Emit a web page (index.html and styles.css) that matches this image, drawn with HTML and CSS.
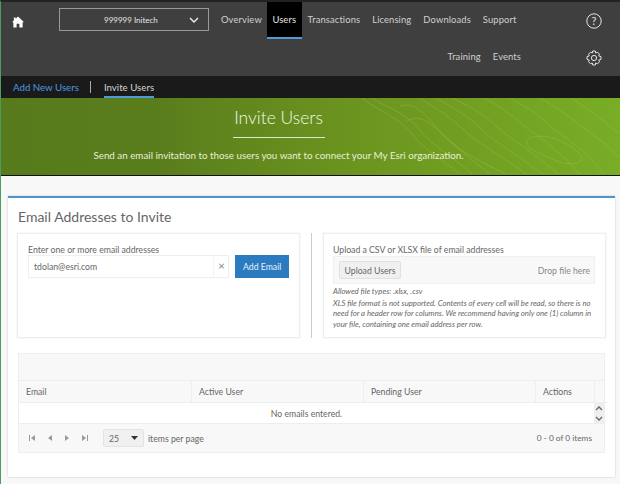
FILE: index.html
```html
<!DOCTYPE html>
<html lang="en">
<head>
    <meta charset="UTF-8">
    <title>Invite Users</title>
    <link rel="stylesheet" href="styles.css">
</head>
<body>
    <header class="topnav">
        <a class="home">
            <svg width="12" height="12" viewBox="0 0 13 13"><path d="M6.500 .5 12.800 6.500 11.500 7V12.500H8V8.500H5V12.500H1.500V7L.2 6.500 2 4.800V1.500H4V2.900Z" fill="#fff"/></svg>
        </a>
        <div class="org">
            <span>999999 Initech</span>
            <svg width="10" height="6" viewBox="0 0 10 6"><path d="M1 1 5 5 9 1" fill="none" stroke="#eee" stroke-width="1.400"/></svg>
        </div>
        <div class="links">
            <div class="row">
                <a>Overview</a>
                <a class="active">Users</a>
                <a>Transactions</a>
                <a>Licensing</a>
                <a>Downloads</a>
                <a>Support</a>
            </div>
            <div class="row second">
                <a>Training</a>
                <a>Events</a>
            </div>
        </div>
        <div class="tools">
            <svg width="16" height="16" viewBox="0 0 16 16"><circle cx="8" cy="8" r="7.200" fill="none" stroke="#e6e6e6"/><text x="8" y="11.700" text-anchor="middle" class="help">?</text></svg>
            <svg width="16" height="16" viewBox="0 0 16 16"><path d="M6.700 1H9.300L9.700 3 11.500 2.200 13.500 4.200 12.700 5.900 15 6.600V9.400L12.700 10.100 13.500 11.800 11.500 13.800 9.700 13 9.300 15H6.700L6.300 13 4.500 13.800 2.500 11.800 3.300 10.100 1 9.400V6.600L3.300 5.900 2.500 4.200 4.500 2.200 6.300 3Z" fill="none" stroke="#e6e6e6"/><circle cx="8" cy="8" r="2.600" fill="none" stroke="#e6e6e6"/></svg>
        </div>
    </header>

    <nav class="subnav">
        <a class="add">Add New Users</a>
        <i class="sep"></i>
        <a class="current">Invite Users</a>
    </nav>

    <section class="banner">
        <svg class="contours" width="260" height="76" viewBox="0 0 260 76" fill="none" stroke="#b5d56a" stroke-opacity=".4" stroke-width=".6">
            <path d="M2 0C20 14 40 20 52 36S80 60 100 76"/>
            <path d="M12 0C28 10 48 16 60 32S90 56 112 76"/>
            <path d="M40 8C52 4 62 12 72 24S96 50 130 76"/>
            <path d="M46 24C60 14 72 26 84 38S112 60 146 76"/>
            <path d="M60 0C78 12 92 20 104 32S132 52 166 76"/>
            <path d="M76 0C94 10 108 18 120 30S148 50 182 76"/>
            <path d="M92 0C110 8 124 16 136 28S164 46 198 76"/>
            <path d="M124 0C140 8 150 16 162 26S190 44 220 76"/>
            <path d="M150 0C164 8 176 14 188 26S216 42 244 76"/>
            <path d="M180 0C194 8 204 14 216 24S240 40 260 60"/>
            <path d="M210 0C222 6 232 14 242 22S254 32 260 36"/>
            <path d="M170 40C186 34 206 44 218 54S212 70 194 62 160 48 170 40Z"/>
        </svg>
        <h1>Invite Users</h1>
        <hr>
        <p>Send an email invitation to those users you want to connect your My Esri organization.</p>
    </section>

    <main class="content">
        <div class="card">
            <h2>Email Addresses to Invite</h2>
            <div class="panels">
                <div class="panel">
                    <label>Enter one or more email addresses</label>
                    <div class="entry">
                        <div class="field">
                            <span>tdolan@esri.com</span>
                            <b>&times;</b>
                        </div>
                        <button class="primary">Add Email</button>
                    </div>
                </div>
                <i class="divider"></i>
                <div class="panel upload">
                    <label>Upload a CSV or XLSX file of email addresses</label>
                    <div class="dropzone">
                        <button>Upload Users</button>
                        <span>Drop file here</span>
                    </div>
                    <p class="types">Allowed file types: .xlsx, .csv</p>
                    <p class="note">XLS file format is not supported. Contents of every cell will be read, so there is no need for a header row for columns. We recommend having only one (1) column in your file, containing one email address per row.</p>
                </div>
            </div>

            <div class="grid">
                <div class="toolbar"></div>
                <div class="cols">
                    <div>Email</div>
                    <div>Active User</div>
                    <div>Pending User</div>
                    <div>Actions</div>
                    <div></div>
                </div>
                <div class="body">
                    <div class="empty">No emails entered.</div>
                    <div class="scroll">
                        <svg width="8" height="5" viewBox="0 0 8 5"><path d="M1 4 4 1 7 4" fill="none" stroke="#666" stroke-width="1.300"/></svg>
                        <svg width="8" height="5" viewBox="0 0 8 5"><path d="M1 1 4 4 7 1" fill="none" stroke="#666" stroke-width="1.300"/></svg>
                    </div>
                </div>
                <div class="pager">
                    <div class="arrows">
                        <svg width="6" height="6" viewBox="0 0 6 6"><path d="M0 0H1V6H0ZM6 0V6L2 3Z"/></svg>
                        <svg width="4" height="6" viewBox="0 0 4 6"><path d="M4 0V6L0 3Z"/></svg>
                        <svg width="4" height="6" viewBox="0 0 4 6"><path d="M0 0V6L4 3Z"/></svg>
                        <svg width="6" height="6" viewBox="0 0 6 6"><path d="M0 0V6L4 3ZM5 0H6V6H5Z"/></svg>
                    </div>
                    <div class="size">
                        <span>25</span>
                        <svg width="7" height="4" viewBox="0 0 7 4"><path d="M0 0H7L3.500 4Z" fill="#333"/></svg>
                    </div>
                    <span class="per">items per page</span>
                    <span class="count">0 - 0 of 0 items</span>
                </div>
            </div>
        </div>
    </main>
</body>
</html>
```

FILE: styles.css
```css
* {
    box-sizing: border-box;
}

body {
    margin: 0;
    height: 484px;
    overflow: hidden;
    font-family: Lato, "Open Sans", sans-serif;
    font-size: 8.700px;
    color: #666;
    background-color: #f8f8f8;
    border-left: 1px solid #4f9a63;
    border-top: 2px solid #222;
}

/* top bar */
.topnav {
    display: flex;
    height: 74px;
    background-color: #3f3f3f;
    color: #d0d0d0;
}

.home {
    width: 58px;
    padding: 14px 0 0 11px;
}

.home svg {
    display: block;
}

.org {
    display: flex;
    align-items: center;
    width: 150px;
    height: 23px;
    margin-top: 6px;
    padding: 0 9px 0 44px;
    justify-content: space-between;
    border: 1px solid #999;
    color: #e4e4e4;
    font-size: 8px;
}

.links {
    flex: 1;
    padding-left: 6px;
}

.row {
    display: flex;
    height: 37px;
    font-size: 9.400px;
    letter-spacing: .12px;
}

.row a {
    padding: 12px 6px 0;
}

.row a.active {
    margin-left: -1px;
    padding: 12px 5.500px 0;
    background-color: #000;
    border-bottom: 2px solid #4f9ad8;
    color: #e6e6e6;
}

.row.second {
    justify-content: flex-end;
    height: 35px;
    padding-right: 33px;
}

.row.second a {
    padding-top: 12px;
}

.tools {
    display: flex;
    flex-direction: column;
    gap: 21px;
    width: 60px;
    padding: 11px 0 0 26px;
}

.help {
    font-size: 11px;
    fill: #e6e6e6;
    font-family: Lato, sans-serif;
}

/* sub nav */
.subnav {
    display: flex;
    align-items: center;
    height: 22px;
    padding-left: 12px;
    background-color: #1a1a1a;
    font-size: 9.700px;
}

.add {
    color: #4a9ae0;
}

.sep {
    width: 1px;
    height: 12px;
    margin: 0 13px 0 11px;
    background-color: #aaa;
}

.current {
    align-self: flex-end;
    height: 20px;
    padding-top: 3px;
    color: #d4d4d4;
    border-bottom: 2px solid #4f9ad8;
}

/* banner */
.banner {
    position: relative;
    height: 78px;
    padding: 1px 64px 0 0;
    text-align: center;
    color: #e8efd8;
    background: linear-gradient(90deg, #577a1c 0%, #5a7d1c 25%, #6b931f 55%, #79ad26 100%);
    border-bottom: 1px solid #111;
    overflow: hidden;
}

.contours {
    position: absolute;
    top: 0;
    right: 0;
}

.banner h1 {
    position: relative;
    margin: 8px 0 0;
    font-size: 17.500px;
    font-weight: 300;
    color: #f4f7ea;
    line-height: 22px;
}

.banner hr {
    position: relative;
    width: 92px;
    margin: 8px auto 0;
    border: 0;
    border-top: 1px solid #dfe8c8;
}

.banner p {
    position: relative;
    margin: 11px 0 0;
    font-size: 9.800px;
}

/* content */
.content {
    padding: 20px 5px 0 7px;
}

.card {
    height: 281px;
    padding: 10px 9px 0;
    background-color: #fff;
    border-top: 2px solid #4f94cf;
    box-shadow: 0 0 2px rgba(0, 0, 0, .2);
}

.card h2 {
    margin: 0 0 0 1px;
    font-size: 14px;
    font-weight: 400;
    line-height: 17px;
    color: #666;
}

.panels {
    display: flex;
    gap: 11px;
    margin-top: 8px;
}

.panel {
    flex: none;
    width: 283px;
    height: 105px;
    padding: 10px;
    border: 1px solid #eee;
    box-shadow: 0 0 2px rgba(0, 0, 0, .08);
}

.panel.upload {
    padding-left: 9px;
}

.panel label {
    display: block;
    line-height: 11px;
}

.divider {
    width: 1px;
    background-color: #ccc;
}

.entry {
    display: flex;
    gap: 6px;
    height: 23px;
}

.field {
    display: flex;
    justify-content: space-between;
    align-items: stretch;
    width: 203px;
    padding-left: 5px;
    border: 1px solid #eee;
}

.field span {
    align-self: center;
}

.field b {
    width: 15px;
    border-left: 1px solid #f4f4f4;
    font-weight: 400;
    font-size: 12px;
    line-height: 20px;
    text-align: center;
    color: #888;
}

.primary {
    width: 54px;
    border: 0;
    color: #e8f1f8;
    background-color: #2b7bc0;
    font: 8.700px Lato, sans-serif;
}

.dropzone {
    display: flex;
    justify-content: space-between;
    align-items: center;
    height: 28px;
    margin-top: 1px;
    padding: 0 4px 0 5px;
    background-color: #f8f8f8;
    border: 1px solid #f0f0f0;
    color: #888;
}

.dropzone button {
    height: 18px;
    width: 62px;
    padding: 0;
    border: 1px solid #e0e0e0;
    border-radius: 2px;
    background-color: #f0f0f0;
    color: #666;
    font: 8.700px Lato, sans-serif;
}

.upload p {
    margin: 0;
    font-size: 7.750px;
    font-style: italic;
    line-height: 10.500px;
}

.upload .types {
    margin-top: 2px;
}

.upload .note {
    margin-top: 1px;
}

/* table */
.grid {
    margin: 15px 0 0 1px;
    width: 587px;
    border: 1px solid #eee;
    background-color: #f8f8f8;
}

.toolbar {
    height: 27px;
    border-bottom: 1px solid #eee;
}

.cols {
    display: grid;
    grid-template-columns: 172px 172px 172px 59px 1fr;
    height: 22px;
}

.cols div {
    padding: 5px 7px 0;
    border-left: 1px solid #eee;
    border-bottom: 1px solid #eee;
}

.cols div:first-child {
    border-left: 0;
}

.body {
    display: flex;
    height: 21px;
    border-bottom: 1px solid #eee;
    background-color: #fff;
}

.empty {
    flex: 1;
    padding-top: 5px;
    text-align: center;
}

.scroll {
    display: flex;
    flex-direction: column;
    justify-content: space-between;
    align-items: center;
    width: 10px;
    padding: 3px 0 2px;
    background-color: #eee;
}

.pager {
    display: flex;
    align-items: center;
    height: 28px;
    padding: 0 12px 0 10px;
}

.arrows {
    display: flex;
    gap: 13px;
    align-items: center;
    width: 74px;
    fill: #999;
}

.size {
    display: flex;
    justify-content: space-between;
    align-items: center;
    width: 41px;
    height: 18px;
    padding: 0 5px;
    margin-right: 4px;
    background-color: #f0f0f0;
    border: 1px solid #e4e4e4;
    border-radius: 2px;
}

.count {
    margin-left: auto;
    font-size: 8.300px;
}
```
